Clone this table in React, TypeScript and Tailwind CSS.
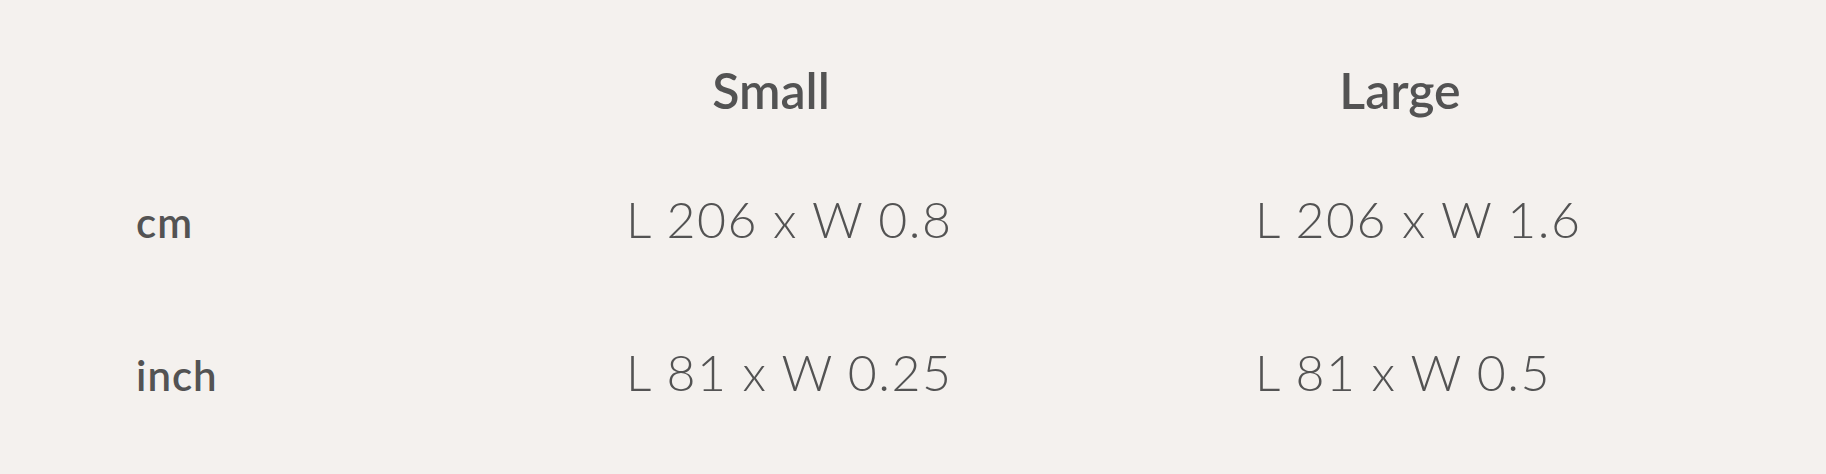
const rows = [
  { unit: "cm", small: "L 206 x W 0.8", large: "L 206 x W 1.6" },
  { unit: "inch", small: "L 81 x W 0.25", large: "L 81 x W 0.5" },
];

export default function App() {
  return (
    <div className="w-[1826px] h-[474px] bg-[#f4f1ee] text-[#535353] font-['Lato','Liberation_Sans',sans-serif] pl-[136px] pt-[64px]">
      <div className="grid grid-cols-[490px_629px_1fr]">
        <div />
        <div className="w-[290px] text-center text-[50px] leading-[52px] font-semibold">Small</div>
        <div className="w-[290px] text-center text-[50px] leading-[52px] font-semibold">Large</div>
      </div>

      {rows.map((row, i) => (
        <div
          key={row.unit}
          className={`grid grid-cols-[490px_629px_1fr] items-baseline ${i === 0 ? "mt-[78px]" : "mt-[100px]"}`}
        >
          <div className="text-[42px] leading-[50px] font-semibold tracking-[1px]">{row.unit}</div>
          <div className="text-[50px] leading-[50px] font-light tracking-[1.5px]">{row.small}</div>
          <div className="text-[50px] leading-[50px] font-light tracking-[1.5px]">{row.large}</div>
        </div>
      ))}
    </div>
  );
}
